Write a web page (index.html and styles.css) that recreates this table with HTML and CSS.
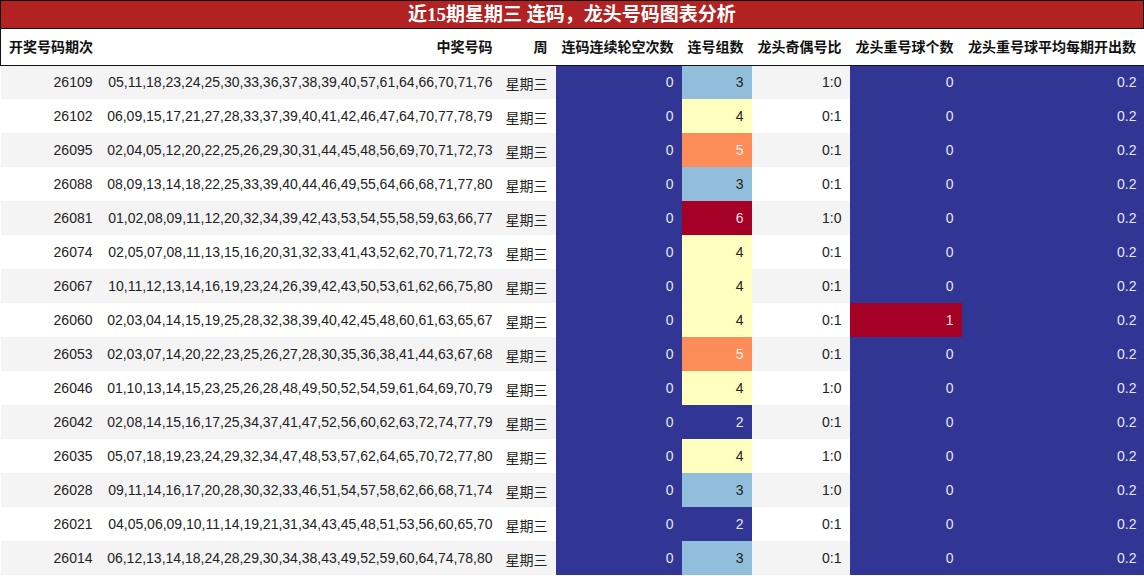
FILE: index.html
```html
<!DOCTYPE html>
<html lang="zh">
<head>
<meta charset="utf-8">
<link rel="stylesheet" href="styles.css">
</head>
<body>
<div class="wrap">
<div class="title">近15期星期三 连码，龙头号码图表分析</div>
<table class="tbl">
<colgroup>
<col style="width:100px"><col style="width:400px"><col style="width:55px"><col style="width:126px"><col style="width:70px"><col style="width:98px"><col style="width:112px"><col style="width:183px">
</colgroup>
<thead>
<tr><th class="l">开奖号码期次</th><th>中奖号码</th><th>周</th><th>连码连续轮空次数</th><th>连号组数</th><th>龙头奇偶号比</th><th>龙头重号球个数</th><th>龙头重号球平均每期开出数</th></tr>
</thead>
<tbody>
<tr><td>26109</td><td>05,11,18,23,24,25,30,33,36,37,38,39,40,57,61,64,66,70,71,76</td><td class="wk">星期三</td><td class="c-blue">0</td><td class="c-lb">3</td><td>1:0</td><td class="c-blue">0</td><td class="c-blue">0.2</td></tr>
<tr><td>26102</td><td>06,09,15,17,21,27,28,33,37,39,40,41,42,46,47,64,70,77,78,79</td><td class="wk">星期三</td><td class="c-blue">0</td><td class="c-y">4</td><td>0:1</td><td class="c-blue">0</td><td class="c-blue">0.2</td></tr>
<tr><td>26095</td><td>02,04,05,12,20,22,25,26,29,30,31,44,45,48,56,69,70,71,72,73</td><td class="wk">星期三</td><td class="c-blue">0</td><td class="c-o">5</td><td>0:1</td><td class="c-blue">0</td><td class="c-blue">0.2</td></tr>
<tr><td>26088</td><td>08,09,13,14,18,22,25,33,39,40,44,46,49,55,64,66,68,71,77,80</td><td class="wk">星期三</td><td class="c-blue">0</td><td class="c-lb">3</td><td>0:1</td><td class="c-blue">0</td><td class="c-blue">0.2</td></tr>
<tr><td>26081</td><td>01,02,08,09,11,12,20,32,34,39,42,43,53,54,55,58,59,63,66,77</td><td class="wk">星期三</td><td class="c-blue">0</td><td class="c-r">6</td><td>1:0</td><td class="c-blue">0</td><td class="c-blue">0.2</td></tr>
<tr><td>26074</td><td>02,05,07,08,11,13,15,16,20,31,32,33,41,43,52,62,70,71,72,73</td><td class="wk">星期三</td><td class="c-blue">0</td><td class="c-y">4</td><td>0:1</td><td class="c-blue">0</td><td class="c-blue">0.2</td></tr>
<tr><td>26067</td><td>10,11,12,13,14,16,19,23,24,26,39,42,43,50,53,61,62,66,75,80</td><td class="wk">星期三</td><td class="c-blue">0</td><td class="c-y">4</td><td>0:1</td><td class="c-blue">0</td><td class="c-blue">0.2</td></tr>
<tr><td>26060</td><td>02,03,04,14,15,19,25,28,32,38,39,40,42,45,48,60,61,63,65,67</td><td class="wk">星期三</td><td class="c-blue">0</td><td class="c-y">4</td><td>0:1</td><td class="c-r">1</td><td class="c-blue">0.2</td></tr>
<tr><td>26053</td><td>02,03,07,14,20,22,23,25,26,27,28,30,35,36,38,41,44,63,67,68</td><td class="wk">星期三</td><td class="c-blue">0</td><td class="c-o">5</td><td>0:1</td><td class="c-blue">0</td><td class="c-blue">0.2</td></tr>
<tr><td>26046</td><td>01,10,13,14,15,23,25,26,28,48,49,50,52,54,59,61,64,69,70,79</td><td class="wk">星期三</td><td class="c-blue">0</td><td class="c-y">4</td><td>1:0</td><td class="c-blue">0</td><td class="c-blue">0.2</td></tr>
<tr><td>26042</td><td>02,08,14,15,16,17,25,34,37,41,47,52,56,60,62,63,72,74,77,79</td><td class="wk">星期三</td><td class="c-blue">0</td><td class="c-blue">2</td><td>0:1</td><td class="c-blue">0</td><td class="c-blue">0.2</td></tr>
<tr><td>26035</td><td>05,07,18,19,23,24,29,32,34,47,48,53,57,62,64,65,70,72,77,80</td><td class="wk">星期三</td><td class="c-blue">0</td><td class="c-y">4</td><td>1:0</td><td class="c-blue">0</td><td class="c-blue">0.2</td></tr>
<tr><td>26028</td><td>09,11,14,16,17,20,28,30,32,33,46,51,54,57,58,62,66,68,71,74</td><td class="wk">星期三</td><td class="c-blue">0</td><td class="c-lb">3</td><td>1:0</td><td class="c-blue">0</td><td class="c-blue">0.2</td></tr>
<tr><td>26021</td><td>04,05,06,09,10,11,14,19,21,31,34,43,45,48,51,53,56,60,65,70</td><td class="wk">星期三</td><td class="c-blue">0</td><td class="c-blue">2</td><td>0:1</td><td class="c-blue">0</td><td class="c-blue">0.2</td></tr>
<tr><td>26014</td><td>06,12,13,14,18,24,28,29,30,34,38,43,49,52,59,60,64,74,78,80</td><td class="wk">星期三</td><td class="c-blue">0</td><td class="c-lb">3</td><td>0:1</td><td class="c-blue">0</td><td class="c-blue">0.2</td></tr>
</tbody>
</table>
</div>
</body>
</html>
```

FILE: styles.css
```css
html, body {
  margin: 0;
  padding: 0;
  background: #ffffff;
}
.wrap {
  width: 1144px;
  font-family: "Liberation Sans", "Noto Sans CJK SC", sans-serif;
  color: #222222;
}
.title {
  box-sizing: border-box;
  height: 29px;
  background: #b22222;
  border: 1px solid #111111;
  color: #ffffff;
  text-align: center;
  font-family: "Liberation Serif", "Noto Sans CJK SC", serif;
  font-weight: bold;
  font-size: 19px;
  line-height: 27px;
}
.tbl {
  width: 1144px;
  border-collapse: collapse;
  table-layout: fixed;
  font-size: 14px;
}
.tbl th {
  box-sizing: border-box;
  height: 36px;
  padding: 0 8px 0 0;
  text-align: right;
  font-weight: bold;
  font-size: 14px;
  line-height: 18px;
  color: #111111;
  border-bottom: 1px solid #111111;
  white-space: nowrap;
}
.tbl th.l {
  text-align: left;
  padding-left: 8px;
}
.tbl thead tr {
  border-left: 1px solid #111111;
  border-right: 1px solid #111111;
}
.tbl td {
  box-sizing: border-box;
  height: 34px;
  padding: 0 8px 0 0;
  line-height: 18px;
  text-align: right;
  white-space: nowrap;
  color: #222222;
}
.tbl td.wk {
  padding-top: 3px;
}
.tbl tbody tr:nth-child(odd) {
  background: #f4f4f4;
}
.tbl td.c-blue {
  background: #313695;
  color: #e6e6ef;
}
.tbl td.c-lb {
  background: #91bfdb;
  color: #222222;
}
.tbl td.c-y {
  background: #ffffbf;
  color: #222222;
}
.tbl td.c-o {
  background: #fc8d59;
  color: #f6efe8;
}
.tbl td.c-r {
  background: #a50026;
  color: #f1dde0;
}
```
